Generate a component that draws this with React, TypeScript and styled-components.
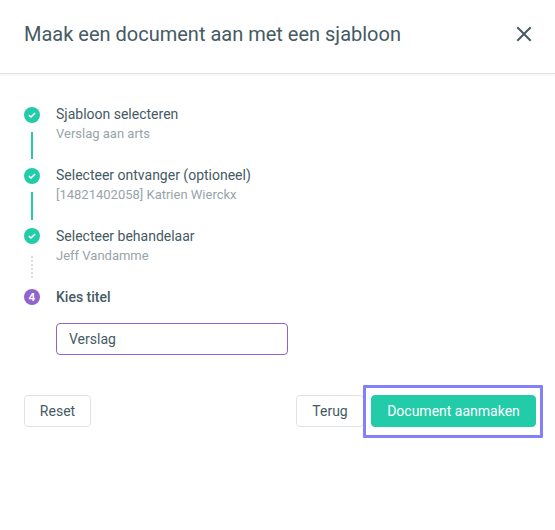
import React from 'react';
import styled, { createGlobalStyle } from 'styled-components';

const GlobalStyle = createGlobalStyle`
  * { box-sizing: border-box; }
  body { margin: 0; background: #fff; font-family: Roboto, "Liberation Sans", sans-serif; color: #455a64; }
  button, input { font-family: inherit; color: inherit; }
`;

const Dialog = styled.main`
  height: 530px;
  background: #fff;
`;

const Header = styled.header`
  height: 74px;
  padding: 0 23px 6px 24px;
  display: flex;
  align-items: center;
  justify-content: space-between;
  border-bottom: 1px solid #e0e2e4;
  box-shadow: 0 1px 3px rgba(0, 0, 0, 0.05);
`;

const Title = styled.h1`
  margin: 0;
  font-size: 20px;
  line-height: 28px;
  font-weight: 400;
`;

const CloseButton = styled.button`
  display: flex;
  width: 16px;
  height: 16px;
  padding: 0;
  border: 0;
  background: none;
`;

const Steps = styled.ol`
  margin: 0;
  padding: 30px 24px 0;
  list-style: none;
`;

const Step = styled.li`
  display: flex;
  gap: 16px;
  height: 61px;
  &:last-child { height: auto; }
`;

const Rail = styled.div<{ $raised?: boolean }>`
  width: 16px;
  padding-top: ${p => (p.$raised ? 2 : 3)}px;
  display: flex;
  flex-direction: column;
  align-items: center;
`;

const Marker = styled.span<{ $active?: boolean }>`
  width: 16px;
  height: 16px;
  flex: none;
  border-radius: 50%;
  display: flex;
  align-items: center;
  justify-content: center;
  background: ${p => (p.$active ? '#9163cf' : '#23cca8')};
  color: #fff;
  font-family: Inter, sans-serif;
  font-size: 10px;
  line-height: 16px;
  font-weight: 700;
`;

const Connector = styled.span<{ $dotted?: boolean; $top: number; $length: number }>`
  flex: none;
  width: 2px;
  height: ${p => p.$length}px;
  margin-top: ${p => p.$top}px;
  background: ${p =>
    p.$dotted ? 'repeating-linear-gradient(#dcdfe1 0 2px, transparent 2px 4px)' : '#23cca8'};
`;

const StepLabel = styled.div<{ $active?: boolean }>`
  font-size: 14px;
  line-height: 20px;
  font-weight: ${p => (p.$active ? 500 : 400)};
`;

const StepValue = styled.div`
  margin-top: 1px;
  font-size: 13px;
  line-height: 18px;
  color: #98a4aa;
`;

const TitleInput = styled.input`
  display: block;
  width: 232px;
  height: 32px;
  margin-top: 16px;
  padding: 0 12px;
  border: 1px solid #9163cf;
  border-radius: 4px;
  font-size: 14px;
  outline: none;
`;

const Actions = styled.footer`
  display: flex;
  align-items: flex-start;
  justify-content: space-between;
  padding: 30px 12px 0 24px;
`;

const ActionGroup = styled.div`
  display: flex;
  align-items: flex-start;
`;

const Button = styled.button<{ $primary?: boolean; $width: number }>`
  display: block;
  width: ${p => p.$width}px;
  height: 32px;
  padding: 0;
  margin-top: ${p => (p.$primary ? 0 : 10)}px;
  border: 1px solid ${p => (p.$primary ? '#23cca8' : '#dfe3e6')};
  border-radius: 4px;
  background: ${p => (p.$primary ? '#23cca8' : '#fff')};
  color: ${p => (p.$primary ? '#fff' : '#455a64')};
  font-size: 14px;
`;

const Highlight = styled.div`
  width: 180px;
  height: 53px;
  margin-left: -1px;
  padding: 7px 5px;
  border: 3px solid #8280fb;
  border-radius: 1px;
  z-index: 1;
`;

const Check = () => (
  <svg width="8" height="8" viewBox="0 0 8 8" fill="none" stroke="#fff" strokeWidth="1.6">
    <path d="M.9 4.1 3 6 7.1 2" />
  </svg>
);

const completed = [
  { label: 'Sjabloon selecteren', value: 'Verslag aan arts', gap: 9, length: 27 },
  { label: 'Selecteer ontvanger (optioneel)', value: '[14821402058] Katrien Wierckx', gap: 8, length: 28 },
  { label: 'Selecteer behandelaar', value: 'Jeff Vandamme', gap: 12, length: 22 },
];

export default function App() {
  return (
    <Dialog>
      <GlobalStyle />
      <Header>
        <Title>Maak een document aan met een sjabloon</Title>
        <CloseButton aria-label="Sluiten">
          <svg width="16" height="16" viewBox="0 0 16 16" fill="none" stroke="#455a64" strokeWidth="2">
            <path d="M1.3 1.3 14.7 14.7M14.7 1.3 1.3 14.7" />
          </svg>
        </CloseButton>
      </Header>
      <Steps>
        {completed.map((step, i) => {
          const last = i === completed.length - 1;
          return (
            <Step key={step.label}>
              <Rail $raised={last}>
                <Marker><Check /></Marker>
                <Connector $dotted={last} $top={step.gap} $length={step.length} />
              </Rail>
              <div>
                <StepLabel>{step.label}</StepLabel>
                <StepValue>{step.value}</StepValue>
              </div>
            </Step>
          );
        })}
        <Step>
          <Rail $raised><Marker $active>4</Marker></Rail>
          <div>
            <StepLabel $active>Kies titel</StepLabel>
            <TitleInput defaultValue="Verslag" />
          </div>
        </Step>
      </Steps>
      <Actions>
        <Button $width={67}>Reset</Button>
        <ActionGroup>
          <Button $width={68}>Terug</Button>
          <Highlight><Button $primary $width={165}>Document aanmaken</Button></Highlight>
        </ActionGroup>
      </Actions>
    </Dialog>
  );
}
